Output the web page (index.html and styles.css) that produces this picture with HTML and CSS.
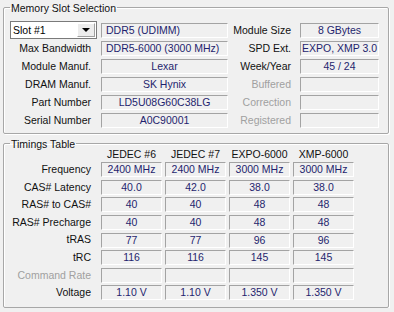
FILE: index.html
```html
<!DOCTYPE html>
<html lang="en">
<head>
<meta charset="UTF-8">
<meta name="viewport" content="width=device-width, initial-scale=1.0">
<title>SPD</title>
<link rel="stylesheet" href="styles.css">
</head>
<body>
<fieldset class="group slots">
    <legend>Memory Slot Selection</legend>
    <div class="slot-grid">
        <div class="combo">
            <span class="combo-text">Slot #1</span>
            <span class="combo-btn"><span class="arrow"></span></span>
        </div>
        <div class="field left">DDR5 (UDIMM)</div>
        <div class="label">Module Size</div>
        <div class="field">8 GBytes</div>

        <div class="label">Max Bandwidth</div>
        <div class="field left">DDR5-6000 (3000 MHz)</div>
        <div class="label">SPD Ext.</div>
        <div class="field">EXPO, XMP 3.0</div>

        <div class="label">Module Manuf.</div>
        <div class="field">Lexar</div>
        <div class="label">Week/Year</div>
        <div class="field">45 / 24</div>

        <div class="label">DRAM Manuf.</div>
        <div class="field">SK Hynix</div>
        <div class="label off">Buffered</div>
        <div class="field"></div>

        <div class="label">Part Number</div>
        <div class="field">LD5U08G60C38LG</div>
        <div class="label off">Correction</div>
        <div class="field"></div>

        <div class="label">Serial Number</div>
        <div class="field">A0C90001</div>
        <div class="label off">Registered</div>
        <div class="field"></div>
    </div>
</fieldset>

<fieldset class="group timings">
    <legend>Timings Table</legend>
    <div class="timing-grid">
        <div></div>
        <div class="head">JEDEC #6</div>
        <div class="head">JEDEC #7</div>
        <div class="head">EXPO-6000</div>
        <div class="head">XMP-6000</div>

        <div class="label">Frequency</div>
        <div class="field">2400 MHz</div>
        <div class="field">2400 MHz</div>
        <div class="field">3000 MHz</div>
        <div class="field">3000 MHz</div>

        <div class="label">CAS# Latency</div>
        <div class="field">40.0</div>
        <div class="field">42.0</div>
        <div class="field">38.0</div>
        <div class="field">38.0</div>

        <div class="label">RAS# to CAS#</div>
        <div class="field">40</div>
        <div class="field">40</div>
        <div class="field">48</div>
        <div class="field">48</div>

        <div class="label">RAS# Precharge</div>
        <div class="field">40</div>
        <div class="field">40</div>
        <div class="field">48</div>
        <div class="field">48</div>

        <div class="label">tRAS</div>
        <div class="field">77</div>
        <div class="field">77</div>
        <div class="field">96</div>
        <div class="field">96</div>

        <div class="label">tRC</div>
        <div class="field">116</div>
        <div class="field">116</div>
        <div class="field">145</div>
        <div class="field">145</div>

        <div class="label off">Command Rate</div>
        <div class="field"></div>
        <div class="field"></div>
        <div class="field"></div>
        <div class="field"></div>

        <div class="label">Voltage</div>
        <div class="field">1.10 V</div>
        <div class="field">1.10 V</div>
        <div class="field">1.350 V</div>
        <div class="field">1.350 V</div>
    </div>
</fieldset>
</body>
</html>
```

FILE: styles.css
```css
body {
    margin: 0;
    background-color: #f0f0f0;
    font-family: "Liberation Sans", Arial, sans-serif;
    font-size: 10.5px;
    color: #111;
}
.group {
    margin: 0 5px 0 3px;
    padding: 7px 0 4px 6px;
    border: 1px solid #a7a7a7;
    border-radius: 2px;
    box-shadow: inset 1px 1px #fff, 1px 1px #fff;
}
.group legend {
    padding: 3px 1px 0;
    line-height: 11px;
    color: #111;
}
.timings {
    margin-top: 2px;
    padding-top: 0;
    padding-bottom: 5px;
}
.slot-grid {
    display: grid;
    grid-template-columns: 87px 127px 64px 79px;
    grid-auto-rows: 18px;
    column-gap: 4px;
}
.timing-grid {
    display: grid;
    grid-template-columns: 88px repeat(4, 61px);
    grid-template-rows: 14px repeat(8, 17.6px);
    column-gap: 3px;
    margin-top: -3px;
}
.label {
    text-align: right;
    padding-right: 5px;
    line-height: 18px;
    white-space: nowrap;
}
.slot-grid .label:nth-child(4n+1) {
    padding-right: 6px;
}
.timing-grid .label {
    padding-right: 7px;
    line-height: 17.6px;
}
.label.off {
    color: #a0a0a0;
}
.head {
    text-align: center;
    line-height: 14px;
    white-space: nowrap;
}
.field {
    box-sizing: border-box;
    height: 15px;
    align-self: center;
    border-top: 1px solid #a3a3a3;
    border-left: 1px solid #a3a3a3;
    border-bottom: 1px solid #fff;
    border-right: 1px solid #fff;
    line-height: 13px;
    text-align: center;
    color: #1f1f6e;
    white-space: nowrap;
    overflow: hidden;
}
.field.left {
    text-align: left;
    padding-left: 4px;
}
.combo {
    box-sizing: border-box;
    height: 18px;
    display: flex;
    align-items: stretch;
    background-color: #fff;
    border: 1px solid #7a7a7a;
}
.combo-text {
    flex: 1;
    padding-left: 2px;
    line-height: 16px;
    color: #000;
}
.combo-btn {
    width: 16px;
    margin: 1px;
    display: flex;
    align-items: center;
    justify-content: center;
    background-color: #ececec;
    border-left: 1px solid #fff;
    border-top: 1px solid #fff;
    border-right: 1px solid #a0a0a0;
    border-bottom: 1px solid #a0a0a0;
}
.arrow {
    width: 0;
    height: 0;
    border-left: 4px solid transparent;
    border-right: 4px solid transparent;
    border-top: 4px solid #000;
}
```
